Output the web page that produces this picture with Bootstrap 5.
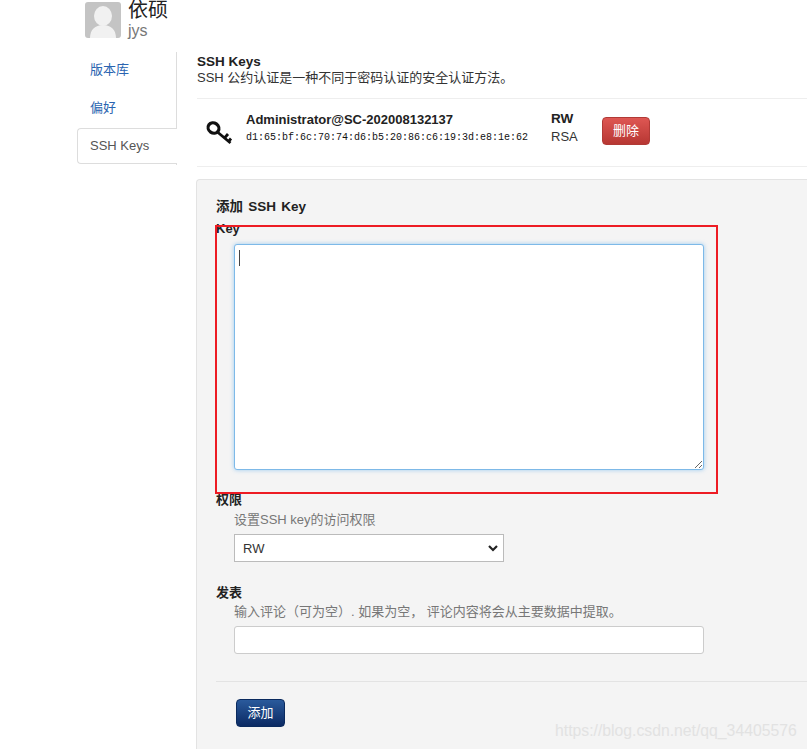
<!DOCTYPE html>
<html lang="zh">
<head>
<meta charset="utf-8">
<title>SSH Keys</title>
<link href="https://cdn.jsdelivr.net/npm/bootstrap@5.3.0/dist/css/bootstrap.min.css" rel="stylesheet">
<style>
html,body{height:749px;overflow:hidden;background:#fff}
body{font-family:"Liberation Sans","Noto Sans CJK SC",sans-serif;font-size:13px;line-height:18px;color:#333;position:relative}
.page-head{padding-left:85px;height:52px;gap:7px}
.avatar-box{width:36px;height:36px;margin-top:2px;border-radius:3px;background:#c4c4c4;overflow:hidden}
.user-name{font-size:20px;line-height:21px;color:#222}
.user-login{font-size:16px;line-height:20px;color:#777}
.layout{padding-left:77px}
.side-nav{width:100px;flex:none;height:113px;border-right:1px solid #ddd}
.side-nav a{display:block;padding:0 13px;height:38px;line-height:34px;color:#2a64b0;text-decoration:none;font-size:13px}
.side-nav a.now{color:#555;background:#fff;width:100px;height:36px;line-height:34px;padding:0 12px;border:1px solid #ddd;border-right:0;border-radius:4px 0 0 4px}
.nav-first{padding-top:1px!important}
.main-col{margin-left:20px;flex:1;min-width:0}
.sec-title{font-weight:700;font-size:13.5px;line-height:15px;padding-top:2px;color:#222}
.sec-desc{line-height:18px;height:30px;color:#333;border-bottom:1px solid #eee}
.key-row{height:68px;border-bottom:1px solid #eee;margin-bottom:12px}
.key-icon{width:28px;margin:19px 13px 0 8px;flex:none}
.key-info{width:305px;flex:none;padding-top:12px}
.key-name{font-weight:700;font-size:13px;line-height:18px;color:#222}
.key-print{font-family:"Liberation Mono",monospace;font-size:10px;line-height:18px;color:#111}
.key-perm{width:51px;flex:none;font-size:13px;line-height:18px;padding-top:11px}
.key-perm b{color:#222;display:block;font-size:13.5px}
.del-btn{width:48px;height:28px;margin-top:18px;padding:0;font-size:13px;color:#fff;border:1px solid #b13a36;border-radius:4px;background:linear-gradient(#de5753,#b73733)}
.well-box{background:#f4f4f4;border:1px solid #e3e3e3;border-right:0;border-bottom:0;border-radius:4px 0 0 0;margin-left:-1px;height:600px;padding:18px 0 0 19px}
.form-head{font-weight:700;font-size:13.5px;line-height:18px;color:#222;word-spacing:1.5px}
.field-name{display:block;font-weight:700;font-size:13px;line-height:14px;color:#222;margin:0}
.key-label{margin-top:6px}
.field-help{display:block;color:#777;font-size:13px;line-height:18px;margin-left:18px;margin-top:4px}
.note-help{margin-top:3px}
.well-box .form-control,.well-box .form-select{border-radius:3px;margin-left:18px;font-size:13px;box-shadow:none}
.well-box .key-area.form-control{width:470px;height:226px;margin-top:8px;border:1px solid #7db9e8;box-shadow:0 0 4px rgba(82,168,236,.55);resize:both;background:#fff}
.caret-line{position:absolute;left:239px;top:250px;width:1px;height:16px;background:#444}
.perm-field{margin-top:23px}
.well-box .perm-sel.form-select{width:270px;height:28px;margin-top:5px;padding:1px 8px 0;border:1px solid #bbb;border-radius:0;color:#333;background-position:right 5px center;background-size:10px 8px;background-image:url("data:image/svg+xml,%3csvg xmlns='http://www.w3.org/2000/svg' viewBox='0 0 10 8'%3e%3cpath fill='none' stroke='%23222' stroke-width='2.2' d='M1 2l4 4 4-4'/%3e%3c/svg%3e")}
.note-field{margin-top:24px}
.well-box .note-input.form-control{width:470px;height:28px;margin-top:5px;border:1px solid #ccc;padding:0 8px}
.form-rule{margin:27px 0 17px;border:0;border-top:1px solid #e3e3e3;opacity:1}
.add-btn{margin-left:20px;width:49px;height:28px;padding:0;font-size:13px;color:#fff;border:1px solid #0a2a5e;border-radius:4px;background:linear-gradient(#2a5a9c,#0b2a63)}
.red-mark{position:absolute;left:215px;top:225px;width:503px;height:269px;border:2px solid #ed1c24;pointer-events:none}
.water{position:absolute;left:555px;top:721px;font-size:15.75px;line-height:20px;color:#e2e2e2;white-space:nowrap}
</style>
</head>
<body>
<header class="page-head d-flex">
  <div class="avatar-box">
    <svg width="36" height="36" viewBox="0 0 36 36"><ellipse cx="18" cy="14" rx="9" ry="10" fill="#f1f1f1"/><path d="M5 36c0-8 5-13 13-13s13 5 13 13z" fill="#f1f1f1"/></svg>
  </div>
  <div>
    <div class="user-name">依硕</div>
    <div class="user-login">jys</div>
  </div>
</header>
<div class="layout d-flex">
  <nav class="side-nav">
    <a href="#" class="nav-first">版本库</a>
    <a href="#" class="nav-first">偏好</a>
    <a href="#" class="now">SSH Keys</a>
  </nav>
  <main class="main-col">
    <div class="sec-title">SSH Keys</div>
    <div class="sec-desc">SSH 公约认证是一种不同于密码认证的安全认证方法。</div>
    <div class="key-row d-flex align-items-start">
      <div class="key-icon">
        <svg class="d-block" width="28" height="28" viewBox="0 0 28 28"><ellipse cx="8.5" cy="10" rx="5.6" ry="5" transform="rotate(35 8.5 10)" fill="none" stroke="#111" stroke-width="3.2"/><path d="M13 14.5L25.5 25M19.5 20l3.5-4M23.5 23.5l2.5-3" fill="none" stroke="#111" stroke-width="2.8"/></svg>
      </div>
      <div class="key-info">
        <div class="key-name">Administrator@SC-202008132137</div>
        <div class="key-print">d1:65:bf:6c:70:74:d6:b5:20:86:c6:19:3d:e8:1e:62</div>
      </div>
      <div class="key-perm"><b>RW</b>RSA</div>
      <button class="btn del-btn" type="button">删除</button>
    </div>
    <form class="well-box">
      <div class="form-head">添加 SSH Key</div>
      <label class="field-name key-label">Key</label>
      <textarea class="form-control key-area"></textarea>
      <div class="perm-field">
        <label class="field-name">权限</label>
        <span class="field-help">设置SSH key的访问权限</span>
        <select class="form-select perm-sel"><option>RW</option></select>
      </div>
      <div class="note-field">
        <label class="field-name">发表</label>
        <span class="field-help note-help">输入评论（可为空）. 如果为空， 评论内容将会从主要数据中提取。</span>
        <input class="form-control note-input" type="text">
      </div>
      <hr class="form-rule">
      <button class="btn add-btn" type="button">添加</button>
    </form>
  </main>
</div>
<div class="caret-line"></div>
<div class="red-mark"></div>
<div class="water">https://blog.csdn.net/qq_34405576</div>
</body>
</html>
